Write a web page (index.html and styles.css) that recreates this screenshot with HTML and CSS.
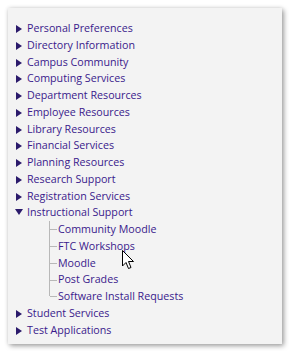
FILE: index.html
```html
<!DOCTYPE html>
<html lang="en">
<head>
  <meta charset="UTF-8" />
  <title>Menu</title>
  <link rel="stylesheet" href="styles.css">
</head>
<body>
  <div class="menu-panel">
    <ul class="tree">
      <li class="node"><span class="arrow"></span><a href="#">Personal Preferences</a></li>
      <li class="node"><span class="arrow"></span><a href="#">Directory Information</a></li>
      <li class="node"><span class="arrow"></span><a href="#">Campus Community</a></li>
      <li class="node"><span class="arrow"></span><a href="#">Computing Services</a></li>
      <li class="node"><span class="arrow"></span><a href="#">Department Resources</a></li>
      <li class="node"><span class="arrow"></span><a href="#">Employee Resources</a></li>
      <li class="node"><span class="arrow"></span><a href="#">Library Resources</a></li>
      <li class="node"><span class="arrow"></span><a href="#">Financial Services</a></li>
      <li class="node"><span class="arrow"></span><a href="#">Planning Resources</a></li>
      <li class="node"><span class="arrow"></span><a href="#">Research Support</a></li>
      <li class="node"><span class="arrow"></span><a href="#">Registration Services</a></li>
      <li class="node open"><span class="arrow down"></span><a href="#">Instructional Support</a>
        <ul class="children">
          <li><a href="#">Community Moodle</a></li>
          <li><a href="#">FTC Workshops</a></li>
          <li><a href="#">Moodle</a></li>
          <li><a href="#">Post Grades</a></li>
          <li class="last"><a href="#">Software Install Requests</a></li>
        </ul>
      </li>
      <li class="node"><span class="arrow"></span><a href="#">Student Services</a></li>
      <li class="node"><span class="arrow"></span><a href="#">Test Applications</a></li>
    </ul>
    <svg class="cursor" width="13" height="20" viewBox="0 0 13 20">
      <path d="M0.5 0.5 L0.5 16 L4 12.5 L6.5 18.5 L9 17.5 L6.5 11.5 L11.5 11.5 Z" fill="#fff" stroke="#000" stroke-width="1"/>
    </svg>
  </div>
</body>
</html>
```

FILE: styles.css
```css
body {
  margin: 0;
  padding: 8px;
  background: #ffffff;
  font-family: "Segoe UI", "Open Sans", sans-serif;
  font-size: 10.7px;
}
.menu-panel {
  position: relative;
  width: 274px;
  height: 336px;
  box-sizing: border-box;
  background: #f3f3f3;
  box-shadow: 2px 2px 5px rgba(0,0,0,0.35), 0 0 4px rgba(0,0,0,0.12);
  padding-top: 12px;
}
.tree, .children {
  list-style: none;
  margin: 0;
  padding: 0;
}
.tree > li {
  line-height: 16.75px;
}
.node {
  padding-left: 8px;
}
.arrow {
  display: inline-block;
  width: 0;
  height: 0;
  border-top: 4px solid transparent;
  border-bottom: 4px solid transparent;
  border-left: 6px solid #2b1a6b;
  margin-right: 5px;
  vertical-align: -1px;
}
.arrow.down {
  border-left: 4px solid transparent;
  border-right: 4px solid transparent;
  border-top: 6px solid #2b1a6b;
  border-bottom: 0;
  margin-right: 4px;
  margin-left: -1px;
  vertical-align: 1px;
}
a {
  color: #3a1a8c;
  text-decoration: none;
}
.children {
  margin-left: 33px;
}
.children li {
  position: relative;
  padding-left: 9px;
}
.children li::before {
  content: "";
  position: absolute;
  left: 0;
  top: 0;
  bottom: 0;
  border-left: 1px solid #b8b8b8;
}
.children li.last::before {
  bottom: 50%;
}
.children li::after {
  content: "";
  position: absolute;
  left: 1px;
  width: 7px;
  top: 50%;
  border-top: 1px solid #b8b8b8;
}
.cursor {
  position: absolute;
  left: 114px;
  top: 242px;
}
```
